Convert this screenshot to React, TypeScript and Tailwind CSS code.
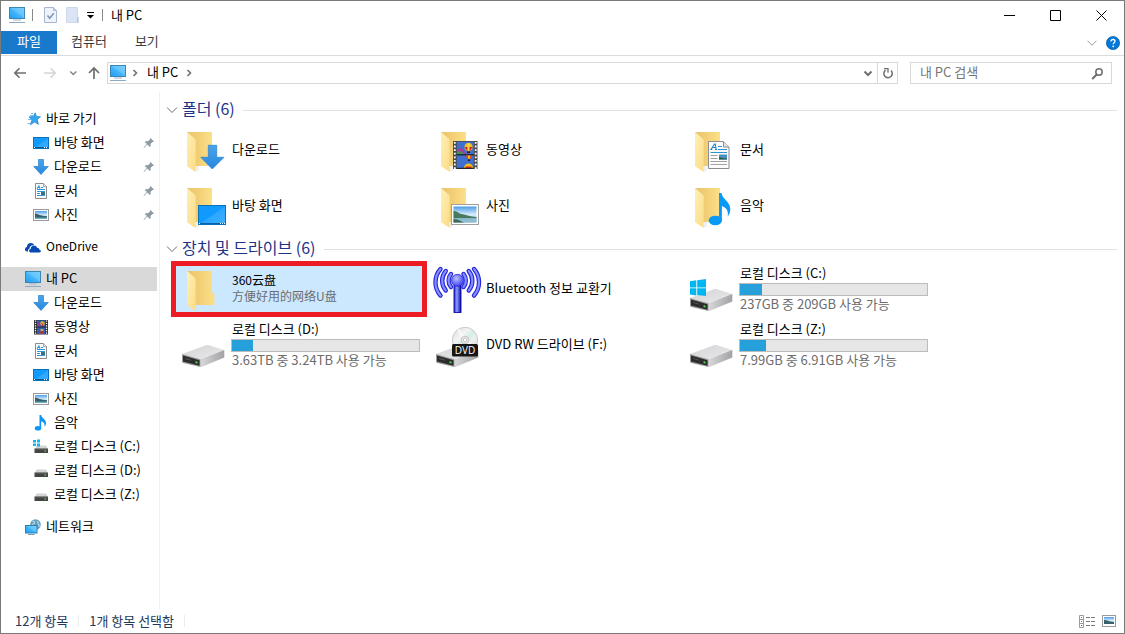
import type { ReactNode } from "react";

type IconProps = { className?: string };

function Gradients() {
  return (
    <svg width="0" height="0" className="absolute" aria-hidden="true">
      <defs>
        <linearGradient id="screen" x1="0" y1="1" x2="1" y2="0">
          <stop offset="0" stopColor="#1e9bf5" />
          <stop offset="0.5" stopColor="#45b6fb" />
          <stop offset="0.52" stopColor="#5fc3fd" />
          <stop offset="1" stopColor="#7fd0ff" />
        </linearGradient>
        <linearGradient id="desk" x1="0" y1="0" x2="1" y2="1">
          <stop offset="0" stopColor="#139bfd" />
          <stop offset="0.5" stopColor="#0f9afd" />
          <stop offset="0.52" stopColor="#2ba7ff" />
          <stop offset="1" stopColor="#3fb0ff" />
        </linearGradient>
        <linearGradient id="flap" x1="0" y1="0" x2="1" y2="1">
          <stop offset="0" stopColor="#fff0b5" />
          <stop offset="1" stopColor="#fbdc86" />
        </linearGradient>
        <linearGradient id="folderBack" x1="0" y1="0" x2="1" y2="0">
          <stop offset="0" stopColor="#e9c368" />
          <stop offset="0.4" stopColor="#f1cd74" />
          <stop offset="1" stopColor="#fbe08a" />
        </linearGradient>
        <linearGradient id="arrow" x1="0" y1="0" x2="0" y2="1">
          <stop offset="0" stopColor="#4ba4ec" />
          <stop offset="1" stopColor="#2388e0" />
        </linearGradient>
        <linearGradient id="metalTop" x1="0" y1="0" x2="1" y2="1">
          <stop offset="0" stopColor="#d2d2d4" />
          <stop offset="1" stopColor="#ebebed" />
        </linearGradient>
        <linearGradient id="metalSide" x1="0" y1="0" x2="1" y2="0">
          <stop offset="0" stopColor="#d8d8da" />
          <stop offset="1" stopColor="#a2a2a5" />
        </linearGradient>
        <linearGradient id="sky" x1="0" y1="0" x2="0" y2="1">
          <stop offset="0" stopColor="#4c9be8" />
          <stop offset="0.5" stopColor="#d6ecfb" />
          <stop offset="1" stopColor="#9cc9e6" />
        </linearGradient>
        <linearGradient id="pole" x1="0" y1="0" x2="1" y2="0">
          <stop offset="0" stopColor="#2222c8" />
          <stop offset="0.4" stopColor="#8f9cff" />
          <stop offset="1" stopColor="#0a0aa8" />
        </linearGradient>
        <radialGradient id="ball" cx="0.4" cy="0.35" r="0.7">
          <stop offset="0" stopColor="#b9c2ff" />
          <stop offset="1" stopColor="#3b3bf0" />
        </radialGradient>
        <linearGradient id="disc" x1="0" y1="0" x2="1" y2="1">
          <stop offset="0" stopColor="#d9dadb" />
          <stop offset="0.35" stopColor="#f4f4f4" />
          <stop offset="0.5" stopColor="#d3efe6" />
          <stop offset="0.65" stopColor="#efeff0" />
          <stop offset="1" stopColor="#cfcfd3" />
        </linearGradient>
      </defs>
    </svg>
  );
}

/* ---------- 16px icons ---------- */

function Svg16({ className = "", children }: IconProps & { children: ReactNode }) {
  return (
    <svg viewBox="0 0 16 16" className={`size-4 shrink-0 ${className}`} aria-hidden="true">
      {children}
    </svg>
  );
}

const PcIcon = () => (
  <Svg16>
    <rect x="0.5" y="0.5" width="15" height="11" fill="url(#screen)" stroke="#3d86b4" />
    <path d="M4 13h8" stroke="#9bb4c9" />
    <path d="M0 15.5h16" stroke="#8ea9c2" />
  </Svg16>
);
const StarIcon = () => (
  <Svg16>
    <path d="M10.200 1.800l1.200 3.700 4.100.3-3.300 2.600 1.200 5-3.800-2.500-4.300 2.900 1.700-4.900-3-3 4.300-.5z" fill="#34a6ee" stroke="#1b84cf" strokeWidth=".7" />
    <path d="M5 4.500h3M3 8.500h3M2.500 12.500h3M6 2.500h2" stroke="#5cb8f0" strokeWidth=".9" />
  </Svg16>
);
const DesktopIcon = () => (
  <Svg16>
    <rect x="0.500" y="2.500" width="15" height="11" fill="url(#desk)" stroke="#0b72ba" />
    <path d="M1 12.500h14" stroke="#0a5a9c" />
    <path d="M1 12.500h1M11 12.500h1M13 12.500h1" stroke="#fff" />
  </Svg16>
);
const DownloadIcon = () => (
  <Svg16>
    <path d="M5.500 .5h5v7h4.800L8 15.500.7 7.500h4.800z" fill="url(#arrow)" stroke="#2a7fc9" strokeWidth=".7" />
  </Svg16>
);
const DocumentIcon = () => (
  <Svg16>
    <path d="M2.500.5h8l3 3v12h-11z" fill="#fff" stroke="#8c8c8c" />
    <path d="M10.500.5v3h3" fill="#e3e3e3" stroke="#8c8c8c" strokeWidth=".7" />
    <path d="M4 6 6 2.500 7 6" stroke="#1f8fd0" strokeWidth=".9" fill="none" />
    <path d="M4.500 4.500h2M8 4.500h2M4 6.500h8M4 8.500h8M4 10.500h3M4 12.500h8" stroke="#2f97d3" />
    <rect x="8" y="9" width="4" height="3" fill="#3a7387" />
  </Svg16>
);
const PictureIcon = () => (
  <Svg16>
    <rect x="0.500" y="2.500" width="15" height="11" fill="#fff" stroke="#999" />
    <rect x="2" y="4" width="12" height="8" fill="url(#sky)" />
    <path d="M2 6.500c3 .5 5 2 8 2.200l4 .6V11c-4 1-8 .6-12 0z" fill="#35606a" />
    <path d="M2 10.500h12V12H2z" fill="#6fa9b9" />
  </Svg16>
);
const VideoIcon = () => (
  <Svg16>
    <rect x="1" y="1" width="14" height="14.500" fill="#343434" />
    <rect x="4" y="1.500" width="8" height="13.500" fill="#345eb4" />
    <path d="M2.500 1.500v14M13.500 1.500v14" stroke="#fff" strokeWidth="1.200" strokeDasharray="1.200 1.200" />
    <circle cx="9.500" cy="4.500" r="2.200" fill="#e8ae1c" />
    <path d="M4 5l2-1 2 3-2 1-2-1z" fill="#8c3fa3" />
    <path d="M8.500 4.500h2l-1 3zM7 12.500h4v2H7z" fill="#cf2d20" />
    <path d="M4 8h8" stroke="#222" />
    <path d="M7.500 11h3" stroke="#f2c12b" strokeWidth="1.500" />
  </Svg16>
);
const MusicIcon = () => (
  <Svg16>
    <ellipse cx="5" cy="13.300" rx="3.200" ry="2.300" fill="#0d95f2" />
    <path d="M6.500 0h1.700c.5 3.500 4.800 4 4.800 8 0 1.600-.6 2.700-1.500 3.700.5-3.200-.9-4.700-3.300-5.400v7.200H6.500z" fill="#0d95f2" />
  </Svg16>
);
const WindowsMini = () => (
  <path d="M0 1h3v2.500H0zM4 .5h3v3H4zM0 4.500h3V7H0zM4 4.500h3v3H4z" fill="#10b4ee" />
);
const DriveIcon = ({ system = false }: { system?: boolean }) => (
  <Svg16>
    <path d="M4 6.500h9l2 3.500H1.500z" fill="#d4d4d6" />
    <rect x="1.500" y="9.500" width="13.500" height="4.500" rx=".6" fill="#454545" />
    <path d="M1.500 9.800h13.500" stroke="#8d8d8d" strokeWidth=".7" />
    <rect x="11.500" y="11.300" width="1.600" height="1.200" fill="#4ee04a" />
    {system && <WindowsMini />}
  </Svg16>
);
const OneDriveIcon = () => (
  <Svg16>
    <path d="M2.300 12.500C.9 12.500 0 11.500 0 10.200c0-1.200.8-2.100 1.900-2.300C1.900 5.700 3.600 4 5.800 4c1.500 0 2.800.8 3.400 2-2.800-.2-4.600 1.500-4.700 3.700-1.400.3-1.800 1.700-1.300 2.800z" fill="#094ab2" />
    <path d="M6.100 13.500c-1.200 0-2-.8-2-1.800s.7-1.700 1.600-1.800c0-1.900 1.400-3.300 3.200-3.300 1.500 0 2.700.9 3.100 2.200 1.500-.1 2.300.7 2.400 1.900.9.100 1.500.7 1.500 1.400 0 .8-.6 1.400-1.500 1.400z" fill="#094ab2" />
  </Svg16>
);
const NetworkIcon = () => (
  <Svg16>
    <circle cx="10.500" cy="5.500" r="5.300" fill="#5f9fc1" />
    <path d="M7.500 2.500c2-.8 2.500.5 2 1.500S8 4.800 7 5.500M12.500 2c1 1.500 0 2.500 1.200 3.500s.8 1.500 0 2.500" fill="none" stroke="#c4dce5" strokeWidth="1.100" />
    <rect x="0.500" y="6.500" width="11.500" height="7.500" fill="url(#screen)" stroke="#2d80b4" />
    <path d="M3 15.500h6.500" stroke="#7f9cb2" />
  </Svg16>
);
const PinIcon = () => (
  <svg viewBox="0 0 12 12" className="size-3 shrink-0" aria-hidden="true">
    <path d="M7.500 1 11 4.500l-1 .6-.6-.2-1.900 2 .2 2-1 1-2.300-2.300L1 11l-.4-.4 3.300-3.500-2-2 1-1 2 .2L7 2.500l-.1-.7z" fill="#8d9aa3" />
  </svg>
);

function Chevron({ dir, className = "" }: { dir: "down" | "right"; className?: string }) {
  return (
    <svg viewBox="0 0 12 12" className={`size-3 shrink-0 ${className}`} fill="none" stroke="currentColor" aria-hidden="true">
      <path d={dir === "down" ? "M2.500 4.500 6 8l3.500-3.500" : "M4.500 3 7.500 6l-3 3"} />
    </svg>
  );
}

function WideChevron() {
  return (
    <svg viewBox="0 0 12 12" className="size-3 shrink-0" fill="none" stroke="currentColor" aria-hidden="true">
      <path d="M1 3.500 6 8.500l5-5" />
    </svg>
  );
}

/* ---------- 48px icons ---------- */

function Svg48({ children }: { children: ReactNode }) {
  return (
    <svg viewBox="0 0 48 48" className="size-12 shrink-0 overflow-visible" aria-hidden="true">
      {children}
    </svg>
  );
}

const FolderBack = () => (
  <>
    <path d="M7 6h25v34H7z" fill="url(#folderBack)" />
    <path d="M15.700 45.800 19 44.600V40h-3.300z" fill="#e6e6e6" opacity=".6" />
    <path d="M7 6l6.500 5.500c1.500 1.200 2.200 2 2.200 3.800V46L8.500 41.200C7.300 40.400 7 40 7 38.500z" fill="url(#flap)" />
  </>
);
const BigDownload = () => (
  <Svg48>
    <FolderBack />
    <path d="M28.300 19.300h8.400v12h7.300L32.300 43 20.800 31.300h7.500z" fill="url(#arrow)" stroke="#2a7fc9" strokeWidth=".7" />
  </Svg48>
);
const BigDesktop = () => (
  <Svg48>
    <FolderBack />
    <rect x="18.500" y="23.500" width="27" height="19" fill="url(#desk)" stroke="#0b72ba" />
    <path d="M19 41.500h26" stroke="#0a62a6" />
    <path d="M19 41.500h1M40 41.500h1M42 41.500h1M44 41.500h1" stroke="#fff" />
  </Svg48>
);
const Balloon = ({ x, y, r }: { x: number; y: number; r: number }) => (
  <g>
    <circle cx={x} cy={y} r={r} fill="#f3bd16" />
    <path d={`M${x - r} ${y}h${2 * r}l-${r - 1} ${r + 0.5}h-2z`} fill="#d8261c" />
    <path d={`M${x - 1} ${y - r}h2v${2 * r}h-2z`} fill="#f7d94a" />
    <path d={`M${x - 1.5} ${y + r + 0.5}h3v1.500h-3z`} fill="#38180a" />
  </g>
);
const BigVideo = () => (
  <Svg48>
    <FolderBack />
    <rect x="19" y="15" width="24.500" height="28" fill="#4a4a4a" />
    <rect x="22.800" y="15.800" width="17" height="26.400" fill="#3f6fd0" />
    <path d="M20.800 16v27M41.700 16v27" stroke="#fff" strokeWidth="1.800" strokeDasharray="1.800 1.800" />
    <path d="M23 24.500l3-3 3 2 3 4.500h-9z" fill="#aa3c9c" />
    <path d="M23 26l3-1 4 3h-7z" fill="#3c9c46" />
    <Balloon x={34.5} y={21} r={4} />
    <path d="M22.800 28.800h17" stroke="#1b1b1b" strokeWidth="1.200" />
    <path d="M31.500 29.500h7l-2 3.500h-3z" fill="#e0461c" />
    <path d="M33.700 29.500h2.600l-.6 3.500h-1.400z" fill="#f3bd16" />
    <path d="M34 33.500h2v1.500h-2z" fill="#271010" />
    <path d="M30 42a4.500 4.500 0 0 1 9 0z" fill="#f3bd16" />
    <path d="M31.500 40.500h6V42h-6z" fill="#d8261c" />
    <path d="M22.800 42.300h17" stroke="#1b1b1b" />
  </Svg48>
);
const BigPicture = () => (
  <Svg48>
    <FolderBack />
    <rect x="17.500" y="22.500" width="27" height="20" fill="#fff" stroke="#a0a0a0" />
    <rect x="19.500" y="24.500" width="23" height="16" fill="url(#sky)" />
    <path d="M19.500 29c3-.5 5 2.500 8 3 5 1 9 2.500 15 3v1.500h-23z" fill="#477a5e" />
    <path d="M19.500 36.300h23v4.200h-23z" fill="#8fbcd2" />
    <path d="M19.500 37c5 .3 6 2 11 3.500h-11z" fill="#3c6a55" />
  </Svg48>
);
const BigDocument = () => (
  <Svg48>
    <FolderBack />
    <path d="M20.500 15.500h15l5.500 5.500v21.500H20.500z" fill="#fcfcfc" stroke="#8c8c8c" />
    <path d="M35.500 15.500V21H41" fill="#e6e6e6" stroke="#8c8c8c" />
    <path d="M23 23.500l3.500-5.500h.7l1 5.500M24.500 21.500h3M22.300 23.500h2M27 23.500h2" stroke="#1c86cc" fill="none" strokeWidth="1.100" />
    <path d="M30 20.500h4M30 23.500h9M22.500 26.500h16.500" stroke="#2b93d6" strokeWidth="1.100" />
    <path d="M22.500 29.500h7M22.500 32.500h7M22.500 35.500h16.500M22.500 38.500h16.500" stroke="#a3a3a3" />
    <rect x="31" y="28.500" width="8" height="5" fill="#4a90c4" />
    <path d="M31 31l4 1 4 .5v1h-8z" fill="#2c5a4c" />
  </Svg48>
);
const BigMusic = () => (
  <Svg48>
    <FolderBack />
    <ellipse cx="27.300" cy="38.500" rx="6.600" ry="4.800" fill="#079bf7" />
    <path d="M31 11h2.500c.5 6 8.800 8.500 8.800 16 0 3-.8 5.300-2.600 7.500 1-6-1.500-9-5.800-10.500v15H31z" fill="#079bf7" />
  </Svg48>
);
const DriveBody = () => (
  <>
    <path d="M2 33 26 24.300c1-.3 2-.3 3 0L44.300 29 20.500 38.300z" fill="url(#metalTop)" />
    <path d="M20.500 38.300 44.300 29v7.500L22 45.800c-.7.300-1.500.2-1.500.2z" fill="url(#metalSide)" />
    <path d="M2 33l18.500 5.300V46L3.300 42c-1-.3-1.300-.7-1.300-1.700z" fill="#999" />
    <path d="M3 34.500l16.500 4.800v5.500L3 40.500z" fill="#2c2c2c" />
    <path d="M5 37.500l6 1.700" stroke="#555" />
    <path d="M15.500 40.300l2 .5v1.700l-2-.5z" fill="#4dea48" />
  </>
);
const BigDrive = ({ system = false }: { system?: boolean }) => (
  <Svg48>
    <DriveBody />
    {system && <path d="M2 16.200l6.300-.9v7.100H2zM9.200 15.200l8.800-1.300v8.500H9.200zM2 23.300h6.300v7.100L2 29.500zM9.200 23.300H18V31l-8.800-1z" fill="#00b7f1" />}
  </Svg48>
);
const BigDvd = () => (
  <Svg48>
    <DriveBody />
    <circle cx="31" cy="19" r="12.700" fill="url(#disc)" stroke="#b7b7b9" strokeWidth=".7" />
    <path d="M31 19 24 8.500M31 19l9 8" stroke="#fff" strokeWidth="3" opacity=".6" />
    <circle cx="31" cy="19" r="3.800" fill="#e8e8e8" stroke="#bdbdbd" strokeWidth=".8" />
    <circle cx="31" cy="19" r="1.700" fill="#fff" stroke="#aaa" strokeWidth=".6" />
    <rect x="18" y="23" width="26" height="12.500" rx="1.500" fill="#161616" />
    <text x="31" y="33" textAnchor="middle" fontSize="10" fill="#fff" fontFamily="Open Sans, sans-serif">DVD</text>
  </Svg48>
);
const waves = [
  "M17 9a10 10 0 0 0 0 13",
  "M11.800 6a15 15 0 0 0 0 19.500",
  "M6.500 4a20 20 0 0 0 0 26.500",
];
const BigBluetooth = () => (
  <Svg48>
    {[false, true].map((flip) => (
      <g key={String(flip)} transform={flip ? "translate(46.500 0) scale(-1 1)" : undefined} fill="none" strokeLinecap="round">
        {waves.map((d) => (
          <g key={d}>
            <path d={d} stroke="#2424dc" strokeWidth="4.400" />
            <path d={d} stroke="#8490ff" strokeWidth="2.200" />
          </g>
        ))}
      </g>
    ))}
    <rect x="20" y="19" width="7" height="28.500" fill="url(#pole)" stroke="#0b0b9c" strokeWidth=".9" />
    <circle cx="23.500" cy="15.300" r="6" fill="url(#ball)" stroke="#2424d8" strokeWidth=".8" />
  </Svg48>
);
const BigFolder = () => (
  <Svg48>
    <path d="M7 6h25v22h1.500c.6 0 1 .4 1 1V40H7z" fill="url(#folderBack)" />
    <path d="M7 6l6.500 5.500c1.500 1.200 2.200 2 2.200 3.800V46L8.500 41.200C7.300 40.400 7 40 7 38.500z" fill="url(#flap)" />
  </Svg48>
);

/* ---------- window ---------- */

function TitleBar() {
  return (
    <header className="flex h-[30px] items-center pb-0.5 pl-2">
      <PcIcon />
      <span className="ml-[7px] h-3 w-px bg-[#8a8a8a]" />
      <button type="button" aria-label="속성" className="ml-[11px]">
        <svg viewBox="0 0 13 16" className="h-4 w-[13px]" aria-hidden="true">
          <path d="M.5.5h9l3 3v12H.5z" fill="#eef3fb" stroke="#a9b8d2" />
          <path d="M9.500.5v3h3" fill="#c9d4e6" stroke="#a9b8d2" />
          <path d="M3.500 8.500l2.200 2.700 4-5" fill="none" stroke="#7e93b5" strokeWidth="1.500" />
        </svg>
      </button>
      <button type="button" aria-label="새 폴더" className="ml-[9px]">
        <svg viewBox="0 0 13 16" className="h-4 w-[13px]" aria-hidden="true">
          <path d="M.5.5h11v10h1v5H.5z" fill="#dbe4f4" stroke="#cdd8ea" />
          <path d="M11.500 10.500v5" stroke="#b4c2da" />
        </svg>
      </button>
      <button type="button" aria-label="빠른 실행 도구 모음 사용자 지정" className="ml-[7px]">
        <svg viewBox="0 0 9 8" className="h-2 w-[9px]" aria-hidden="true">
          <path d="M1 1.500h7" stroke="#000" />
          <path d="M1 4h7L4.500 7.500z" fill="#000" />
        </svg>
      </button>
      <span className="ml-[7px] h-3 w-px bg-[#8a8a8a]" />
      <h1 className="ml-2 leading-5">내 PC</h1>
      <div className="ml-auto flex self-stretch">
        {[
          ["최소화", "M0 5.500h11"],
          ["최대화", "M.5.5h10v10H.5z"],
          ["닫기", "M.5.5l10 10M10.500.5l-10 10"],
        ].map(([label, d]) => (
          <button key={label} type="button" aria-label={label} className="flex w-[46px] items-center justify-center">
            <svg viewBox="0 0 11 11" className="size-[11px]" fill="none" stroke="#000" aria-hidden="true">
              <path d={d} />
            </svg>
          </button>
        ))}
      </div>
    </header>
  );
}

function Ribbon() {
  return (
    <div className="flex h-[25px] items-start border-b border-[#dadbdc] text-[#3b3b3b]">
      <button type="button" className="h-[23px] w-14 bg-[#1979ca] pb-[3px] leading-5 text-white">파일</button>
      <button type="button" className="h-[23px] px-3.5 pb-[3px] leading-5">컴퓨터</button>
      <button type="button" className="h-[23px] px-3.5 pb-[3px] leading-5">보기</button>
      <div className="ml-auto flex h-6 items-center gap-2 pr-1">
        <button type="button" aria-label="리본 확장" className="scale-90 text-[#8f8f8f]"><WideChevron /></button>
        <button type="button" aria-label="도움말">
          <svg viewBox="0 0 14 14" className="size-3.5" aria-hidden="true">
            <circle cx="7" cy="7" r="6.600" fill="#0078d7" stroke="#0a5fa8" strokeWidth=".7" />
            <path d="M5 5.500C5 4 6 3.500 7 3.500s2 .6 2 1.800C9 6.700 7.200 6.700 7.200 8.200" fill="none" stroke="#fff" strokeWidth="1.300" />
            <circle cx="7.200" cy="10.300" r=".9" fill="#fff" />
          </svg>
        </button>
      </div>
    </div>
  );
}

function AddressRow() {
  return (
    <div className="flex items-center py-1.5 pr-3 pl-3 text-[#707070]">
      <button type="button" aria-label="뒤로">
        <svg viewBox="0 0 14 14" className="size-3.5" fill="none" stroke="#6d6d6d" strokeWidth="1.600" aria-hidden="true"><path d="M13 7H2M6.500 2.300 1.800 7l4.700 4.700" /></svg>
      </button>
      <button type="button" aria-label="앞으로" disabled className="ml-4">
        <svg viewBox="0 0 14 14" className="size-3.5" fill="none" stroke="#d6d6d6" strokeWidth="1.600" aria-hidden="true"><path d="M1 7h11M7.500 2.300 12.200 7l-4.700 4.700" /></svg>
      </button>
      <button type="button" aria-label="최근 위치" className="ml-2.5">
        <svg viewBox="0 0 12 12" className="size-3" fill="none" stroke="#858585" strokeWidth="1.500" aria-hidden="true"><path d="M3.300 4.500 6.300 7.500l3-3" /></svg>
      </button>
      <button type="button" aria-label="위로" className="ml-2">
        <svg viewBox="0 0 14 14" className="size-3.5" fill="none" stroke="#6d6d6d" strokeWidth="1.700" aria-hidden="true"><path d="M7 13V2M2 7l5-5 5 5" /></svg>
      </button>
      <div className="ml-1.5 flex h-[22px] min-w-0 flex-1 items-center border border-[#d9d9d9] pl-0.5">
        <PcIcon />
        <Chevron dir="right" className="ml-[3px] stroke-[1.600]" />
        <button type="button" className="ml-1.5 pb-0.5 leading-[18px] text-black">내 PC</button>
        <Chevron dir="right" className="ml-[5px] stroke-[1.600]" />
        <button type="button" aria-label="이전 위치" className="mr-[3px] ml-auto"><Chevron dir="down" className="stroke-2" /></button>
        <button type="button" aria-label="새로 고침" className="flex w-5 items-center justify-center self-stretch border-l border-[#d9d9d9]">
          <svg viewBox="0 0 12 12" className="size-3" fill="none" stroke="#6d6d6d" strokeWidth="1.500" aria-hidden="true">
            <path d="M9 3.500a4.200 4.200 0 1 1-5.500-.3" />
            <path d="M2 1.700h4v4" strokeWidth="1.300" />
          </svg>
        </button>
      </div>
      <label className="ml-3 flex h-[22px] w-[202px] items-center border border-[#d9d9d9] pr-[7px] pl-[9px]">
        <input type="text" aria-label="내 PC 검색" placeholder="내 PC 검색" className="min-w-0 flex-1 pb-0.5 leading-[18px] outline-none placeholder:text-[#767676]" />
        <svg viewBox="0 0 13 13" className="size-[13px]" fill="none" stroke="#6d6d6d" aria-hidden="true">
          <circle cx="8" cy="5" r="3.200" strokeWidth="1.500" />
          <path d="M5.700 7.500 1.200 12" strokeWidth="2" />
        </svg>
      </label>
    </div>
  );
}

type NavItem = { label: string; icon: ReactNode; pinned?: boolean };
type NavGroup = NavItem & { selected?: boolean; latin?: boolean; items?: NavItem[] };

const nav: NavGroup[] = [
  {
    label: "바로 가기",
    icon: <StarIcon />,
    items: [
      { label: "바탕 화면", icon: <DesktopIcon />, pinned: true },
      { label: "다운로드", icon: <DownloadIcon />, pinned: true },
      { label: "문서", icon: <DocumentIcon />, pinned: true },
      { label: "사진", icon: <PictureIcon />, pinned: true },
    ],
  },
  { label: "OneDrive", icon: <OneDriveIcon />, latin: true },
  {
    label: "내 PC",
    icon: <PcIcon />,
    selected: true,
    items: [
      { label: "다운로드", icon: <DownloadIcon /> },
      { label: "동영상", icon: <VideoIcon /> },
      { label: "문서", icon: <DocumentIcon /> },
      { label: "바탕 화면", icon: <DesktopIcon /> },
      { label: "사진", icon: <PictureIcon /> },
      { label: "음악", icon: <MusicIcon /> },
      { label: "로컬 디스크 (C:)", icon: <DriveIcon system /> },
      { label: "로컬 디스크 (D:)", icon: <DriveIcon /> },
      { label: "로컬 디스크 (Z:)", icon: <DriveIcon /> },
    ],
  },
  { label: "네트워크", icon: <NetworkIcon /> },
];

function Sidebar() {
  return (
    <nav aria-label="탐색 창" className="w-[159px] shrink-0 border-r border-[#f0f0f0] pt-[15px]">
      <ul className="flex flex-col gap-2 pr-0.5">
        {nav.map((group) => (
          <li key={group.label}>
            <a href="#" className={`flex h-6 items-center gap-[5px] pl-6 ${group.selected ? "bg-[#d9d9d9]" : ""}`}>
              {group.icon}
              <span className={`pb-0.5 ${group.latin ? "text-xs leading-5" : ""}`}>{group.label}</span>
            </a>
            {group.items && (
              <ul>
                {group.items.map((item) => (
                  <li key={item.label}>
                    <a href="#" className="flex h-6 items-center gap-[5px] pr-0.5 pl-8">
                      {item.icon}
                      <span className="flex-1 pb-0.5">{item.label}</span>
                      {item.pinned && <PinIcon />}
                    </a>
                  </li>
                ))}
              </ul>
            )}
          </li>
        ))}
      </ul>
    </nav>
  );
}

function Section({ title, children }: { title: string; children: ReactNode }) {
  return (
    <section>
      <h2 className="flex h-6 items-center text-base text-[#1e3287]">
        <button type="button" className="flex items-center gap-1">
          <span className="text-[#6f6f6f]"><WideChevron /></span>
          <span className="pb-1 leading-5">{title}</span>
        </button>
        <span className="ml-2 h-px flex-1 bg-[#e2e2e2]" />
      </h2>
      <ul className="grid grid-cols-[repeat(auto-fill,254px)] pl-1.5">{children}</ul>
    </section>
  );
}

type TileProps = { icon: ReactNode; label: string; detail?: string; used?: number; selected?: boolean };

function Tile({ icon, label, detail, used, selected = false }: TileProps) {
  return (
    <li className={`relative flex h-14 items-center gap-[3px] pl-2 ${selected ? "bg-[#cce8ff]" : ""}`}>
      {icon}
      <div className="w-[189px] pb-0.5" lang={selected ? "zh" : undefined}>
        <p className={`px-px ${selected ? "font-['Noto_Sans_CJK_SC',sans-serif] text-xs leading-4" : "leading-[18px]"}`}>{label}</p>
        {used !== undefined && (
          <div role="progressbar" aria-label={label} aria-valuenow={used} className="mt-px h-[13px] border border-[#bcbcbc] bg-[#e6e6e6]">
            <div className="h-full bg-[#26a0da]" style={{ width: `${used}%` }} />
          </div>
        )}
        {detail && (
          <p className={`px-px leading-4 text-[#6d6d6d] ${selected ? "font-['Noto_Sans_CJK_SC',sans-serif] text-xs leading-4" : ""}`}>{detail}</p>
        )}
      </div>
      {selected && <span className="pointer-events-none absolute -inset-x-px inset-y-0 border-[5px] border-[#ed1c24]" />}
    </li>
  );
}

function StatusBar() {
  return (
    <footer className="flex h-6 items-center pr-2 pl-3.5 text-[#1e395b]">
      <span>12개 항목</span>
      <span className="mx-2.5 h-3 w-px bg-[#ececec]" />
      <span>1개 항목 선택함</span>
      <span className="mx-2.5 h-3 w-px bg-[#ececec]" />
      <div className="ml-auto flex items-center gap-1.5">
        <button type="button" aria-label="자세히">
          <svg viewBox="0 0 17 13" className="h-[13px] w-[17px]" fill="none" aria-hidden="true">
            <path d="M.5.500h4v12h-4zM.5 4.500h4M.5 8.500h4" stroke="#9a9a9a" />
            <path d="M7 2.500h4M12 2.500h4M7 6.500h4M12 6.500h4M7 10.500h4M12 10.500h4" stroke="#7a7a7a" />
            <path d="M2 2.500h1" stroke="#2a9a48" /><path d="M2 6.500h1" stroke="#2a78d8" /><path d="M2 10.500h1" stroke="#d82222" />
          </svg>
        </button>
        <button type="button" aria-label="큰 아이콘">
          <svg viewBox="0 0 14 12" className="h-3 w-3.5" aria-hidden="true">
            <rect x=".5" y=".5" width="13" height="11" fill="#fff" stroke="#9a9a9a" />
            <rect x="2" y="2" width="10" height="7" fill="url(#sky)" />
            <path d="M2 5c3 0 5 1.500 10 2v2H2z" fill="#38636c" />
          </svg>
        </button>
      </div>
    </footer>
  );
}

export default function App() {
  return (
    <div className="flex min-h-screen flex-col border border-[#7a7a7a] bg-white font-['Noto_Sans_CJK_KR',sans-serif] text-[13px] leading-5 text-black">
      <Gradients />
      <TitleBar />
      <Ribbon />
      <AddressRow />
      <div className="mt-0.5 flex flex-1">
        <Sidebar />
        <main className="flex min-w-0 flex-1 flex-col gap-[3px] pt-1.5 pr-[7px] pl-1.5">
          <Section title="폴더 (6)">
            <Tile icon={<BigDownload />} label="다운로드" />
            <Tile icon={<BigVideo />} label="동영상" />
            <Tile icon={<BigDocument />} label="문서" />
            <Tile icon={<BigDesktop />} label="바탕 화면" />
            <Tile icon={<BigPicture />} label="사진" />
            <Tile icon={<BigMusic />} label="음악" />
          </Section>
          <Section title="장치 및 드라이브 (6)">
            <Tile icon={<BigFolder />} label="360云盘" detail="方便好用的网络U盘" selected />
            <Tile icon={<BigBluetooth />} label="Bluetooth 정보 교환기" />
            <Tile icon={<BigDrive system />} label="로컬 디스크 (C:)" detail="237GB 중 209GB 사용 가능" used={12} />
            <Tile icon={<BigDrive />} label="로컬 디스크 (D:)" detail="3.63TB 중 3.24TB 사용 가능" used={11} />
            <Tile icon={<BigDvd />} label="DVD RW 드라이브 (F:)" />
            <Tile icon={<BigDrive />} label="로컬 디스크 (Z:)" detail="7.99GB 중 6.91GB 사용 가능" used={14} />
          </Section>
        </main>
      </div>
      <StatusBar />
    </div>
  );
}
